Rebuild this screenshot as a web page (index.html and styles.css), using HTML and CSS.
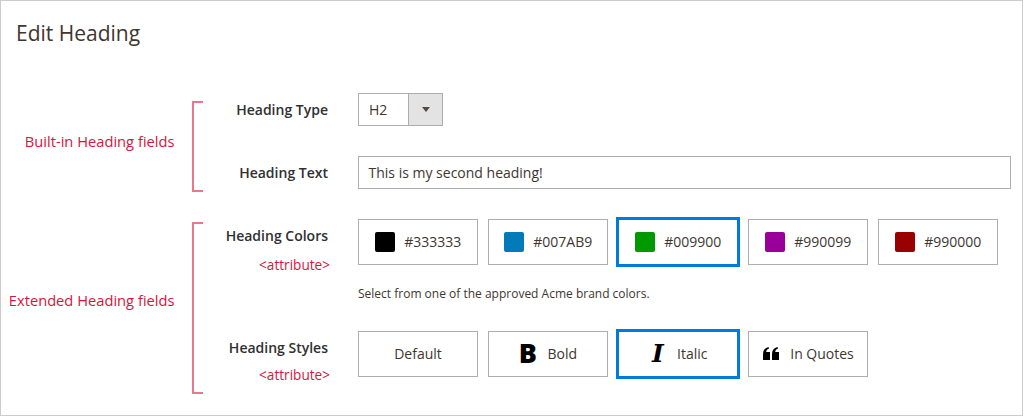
FILE: index.html
```html
<!DOCTYPE html>
<html lang="en">
<head>
    <meta charset="UTF-8">
    <meta name="viewport" content="width=device-width, initial-scale=1.0">
    <title>Edit Heading</title>
    <link rel="stylesheet" href="styles.css">
</head>
<body>

<div class="frame">
    <h1>Edit Heading</h1>

    <div class="group group-builtin">
        <div class="note">Built-in Heading fields</div>
        <div class="bracket"></div>
        <div class="fields">
            <div class="row row-center">
                <div class="label">Heading Type</div>
                <div class="select">
                    <span class="select-value">H2</span>
                    <span class="select-arrow"></span>
                </div>
            </div>
            <div class="row row-center">
                <div class="label">Heading Text</div>
                <div class="text-input">This is my second heading!</div>
            </div>
        </div>
    </div>

    <div class="group group-extended">
        <div class="note">Extended Heading fields</div>
        <div class="bracket"></div>
        <div class="fields">
            <div class="row">
                <div class="label label-attr">
                    Heading Colors
                    <span class="attr">&lt;attribute&gt;</span>
                </div>
                <div class="control">
                    <div class="options">
                        <div class="option"><span class="swatch swatch-black"></span>#333333</div>
                        <div class="option"><span class="swatch swatch-blue"></span>#007AB9</div>
                        <div class="option selected"><span class="swatch swatch-green"></span>#009900</div>
                        <div class="option"><span class="swatch swatch-purple"></span>#990099</div>
                        <div class="option"><span class="swatch swatch-red"></span>#990000</div>
                    </div>
                    <p class="hint">Select from one of the approved Acme brand colors.</p>
                </div>
            </div>
            <div class="row row-styles">
                <div class="label label-attr">
                    Heading Styles
                    <span class="attr">&lt;attribute&gt;</span>
                </div>
                <div class="options">
                    <div class="option">Default</div>
                    <div class="option"><span class="glyph-bold">B</span>Bold</div>
                    <div class="option selected"><span class="glyph-italic">I</span>Italic</div>
                    <div class="option">
                        <svg class="icon-quote" width="16" height="13" viewBox="0 0 16 13">
                            <path d="M0 13V7C0 3.500 1.800 1 5.500 0l.6 1.600C4.200 2.300 3.300 3.500 3.200 5H7v8zM9 13V7C9 3.500 10.800 1 14.500 0l.6 1.600C13.200 2.300 12.300 3.500 12.200 5H16v8z"/>
                        </svg>
                        In Quotes
                    </div>
                </div>
            </div>
        </div>
    </div>
</div>

</body>
</html>
```

FILE: styles.css
```css
/* General Reset */
body {
    margin: 0;
    font-family: "Open Sans", Arial, sans-serif;
    font-size: 14px;
    color: #41362f;
    background-color: #fff;
}

/* Page Wrapper */
.frame {
    box-sizing: border-box;
    width: 1023px;
    height: 416px;
    border: 1px solid #ccc;
    overflow: hidden;
}

h1 {
    margin: 17px 0 0 15px;
    font-size: 21px;
    font-weight: 400;
    line-height: 30px;
}

/* Annotated groups */
.group {
    display: flex;
}

.group-builtin {
    margin-top: 45px;
}

.group-extended {
    margin-top: 30px;
}

.note {
    flex: none;
    box-sizing: border-box;
    width: 173.5px;
    display: flex;
    align-items: center;
    justify-content: flex-end;
    font-size: 14.7px;
    color: #d8143c;
    white-space: nowrap;
}

.group-extended .note {
    padding-top: 4px;
}

.bracket {
    flex: none;
    box-sizing: border-box;
    width: 11px;
    margin-left: 17.5px;
    border: 2px solid #e8788b;
    border-right: 0;
}

.group-builtin .bracket {
    margin-top: 8px;
    margin-bottom: -3px;
}

.group-extended .bracket {
    margin-top: 3px;
    margin-bottom: -17px;
}

.fields {
    flex: 1;
    margin-left: -11px;
    padding-left: 11px;
}

/* Rows */
.row {
    display: flex;
    gap: 30px;
}

.row-center {
    align-items: center;
}

.row + .row {
    margin-top: 30px;
}

.group-extended .row + .row {
    margin-top: 28px;
}

.row-styles {
    height: 46px;
}

.label {
    flex: none;
    width: 125px;
    text-align: right;
    font-weight: 600;
    color: #303030;
    white-space: nowrap;
}

.label-attr {
    padding-top: 7px;
    line-height: 20px;
}

.attr {
    display: block;
    margin-top: 9px;
    margin-right: -2px;
    font-size: 13.6px;
    font-weight: 400;
    color: #d8143c;
}

.row-styles .attr {
    margin-top: 7px;
}

/* Select and text input */
.select {
    display: flex;
    box-sizing: border-box;
    width: 85px;
    height: 33px;
    border: 1px solid #adadad;
}

.select-value {
    flex: 1;
    padding-left: 10px;
    line-height: 31px;
}

.select-arrow {
    flex: none;
    width: 33px;
    display: flex;
    align-items: center;
    justify-content: center;
    background-color: #e3e3e3;
    border-left: 1px solid #adadad;
}

.select-arrow::after {
    content: "";
    border-style: solid;
    border-width: 5px 4px 0;
    border-color: #514943 transparent transparent;
}

.text-input {
    box-sizing: border-box;
    width: 653px;
    height: 33px;
    padding-left: 9.5px;
    line-height: 31px;
    border: 1px solid #adadad;
}

/* Option buttons */
.options {
    display: flex;
    gap: 10px;
}

.option {
    box-sizing: border-box;
    width: 120px;
    height: 46px;
    display: flex;
    align-items: center;
    justify-content: center;
    line-height: 18px;
    border: 1px solid #adadad;
}

.option.selected {
    border-color: #007bdb;
    outline: 3px solid #007bdb;
    outline-offset: -1px;
}

.swatch {
    flex: none;
    width: 20px;
    height: 20px;
    margin-right: 9.5px;
    border-radius: 2px;
}

.swatch-black { background-color: #000; }
.swatch-blue { background-color: #007ab9; }
.swatch-green { background-color: #009900; }
.swatch-purple { background-color: #990099; }
.swatch-red { background-color: #990000; }

.glyph-bold {
    margin: 0 10.5px 3px 0;
    font-size: 27px;
    font-weight: 800;
    line-height: 1;
    color: #000;
}

.glyph-italic {
    margin: 0 13.5px 1px 3.5px;
    font-family: "DejaVu Serif", serif;
    font-size: 25px;
    font-style: italic;
    font-weight: 700;
    line-height: 1;
    color: #000;
}

.icon-quote {
    flex: none;
    margin: 0 11px 1px 1px;
    fill: #000;
}

.hint {
    margin: 20px 0 0;
    font-size: 12px;
    line-height: 18px;
}
```
